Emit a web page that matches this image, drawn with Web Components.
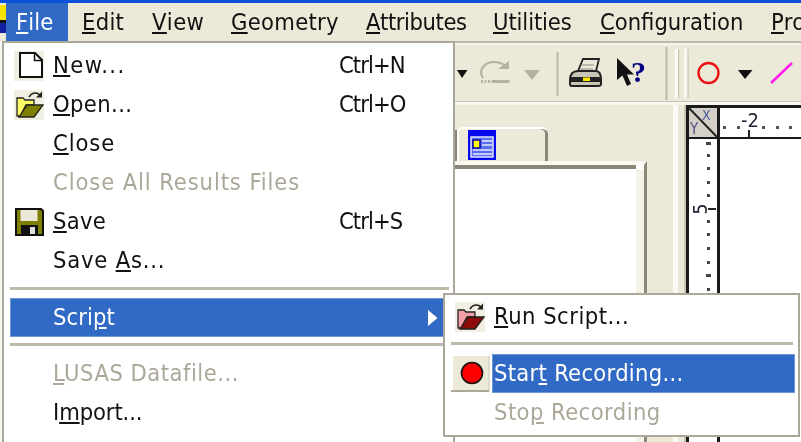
<!DOCTYPE html>
<html><head><meta charset="utf-8"><style>
html,body{margin:0;padding:0;width:801px;height:442px;overflow:hidden;background:#ece9d8}
</style></head><body>
<app-shell>
 <win-item slot="main" icon="new" shortcut="Ctrl+N" style="letter-spacing:1.400px"><u>N</u>ew...</win-item>
 <win-item slot="main" icon="open" shortcut="Ctrl+O" style="letter-spacing:.4px"><u>O</u>pen...</win-item>
 <win-item slot="main" style="letter-spacing:.9px"><u>C</u>lose</win-item>
 <win-item slot="main" disabled style="letter-spacing:.9px">Close All Results Files</win-item>
 <win-item slot="main" icon="save" shortcut="Ctrl+S" style="letter-spacing:.3px"><u>S</u>ave</win-item>
 <win-item slot="main" style="letter-spacing:.8px">Save <u>A</u>s...</win-item>
 <win-sep slot="main" style="margin:7px 0 8px"></win-sep>
 <win-item slot="main" active arrow>Scri<u>p</u>t</win-item>
 <win-sep slot="main" style="margin:6px 0 8px"></win-sep>
 <win-item slot="main" disabled style="letter-spacing:.5px"><u>L</u>USAS Datafile...</win-item>
 <win-item slot="main" style="letter-spacing:-.1px">I<u>m</u>port...</win-item>
 <win-item slot="main"><u>E</u>xport...</win-item>
 <win-item slot="sub" icon="run" style="letter-spacing:.5px"><u>R</u>un Script...</win-item>
 <win-sep slot="sub" style="margin:6px 2px 9px 0"></win-sep>
 <win-item slot="sub" icon="rec" active textonly style="letter-spacing:.3px">Star<u>t</u> Recording...</win-item>
 <win-item slot="sub" disabled style="letter-spacing:.45px">Sto<u>p</u> Recording</win-item>
</app-shell>
<script>
const folder=(dither,front)=>`<svg width="30" height="30" viewBox="0 0 30 30"><rect width="30" height="30" fill="#ece9d8" opacity=".75"/><path d="M3 26V8H9L11 10H20V15H12L6 26Z" fill="${dither}" stroke="#222" stroke-width="1.300"/><path d="M5 27L13 15H29L20 27Z" fill="${front}" stroke="#222" stroke-width="1.300"/><path d="M15 7C18 2 23 2 26 5" fill="none" stroke="#222" stroke-width="1.600"/><path d="M28 1.500V7.500H22Z" fill="#222"/></svg>`;
const icons={
 new:`<svg width="30" height="30" viewBox="0 0 30 30"><rect width="30" height="30" fill="#ece9d8" opacity=".75"/><path d="M6 2H21L28 9V26H6Z" fill="#fff" stroke="#111" stroke-width="2"/><path d="M20.500 2.500V9.500H28" fill="none" stroke="#111" stroke-width="1.500"/></svg>`,
 open:folder('#ffff66','#808000'),
 run:folder('#f4a0a8','#8b0a0a'),
 save:`<svg width="30" height="30" viewBox="0 0 30 30"><path d="M2 2H27L29 4V28H2Z" fill="#808000" stroke="#111" stroke-width="2"/><rect x="6.500" y="3" width="17" height="11" fill="#ece9d8"/><rect x="7" y="18" width="17" height="10" fill="#111"/><rect x="16" y="20" width="5" height="7" fill="#ddd"/></svg>`,
 rec:`<svg class="btn" width="39" height="37" viewBox="0 0 39 37"><rect x="2" y="1" width="36" height="34" fill="#ece9d8"/><path d="M38 0V36" stroke="#d6d3c4" stroke-width="1.500"/><path d="M0 36H38" stroke="#aca899" stroke-width="2"/><path d="M2 .5H38" stroke="#fff"/><circle cx="21" cy="18" r="10.500" fill="#f00" stroke="#111" stroke-width="1.600"/></svg>`
};
class WinItem extends HTMLElement{
 constructor(){super();const r=this.attachShadow({mode:'open'});
 const ic=this.getAttribute('icon'),sc=this.getAttribute('shortcut');
 r.innerHTML=`<style>
 :host{display:flex;align-items:stretch;height:39px;color:#111;white-space:nowrap}
 :host([disabled]){color:#aca899}
 :host([active]:not([textonly])){background:#316ac5;color:#fff;box-shadow:inset 0 0 0 1px #6f97d8}
 :host([textonly]) .t{background:#316ac5;color:#fff;box-shadow:inset 0 0 0 1px #6f97d8}
 .ic{width:var(--ic-w,43px);flex:none;display:flex;align-items:center;padding-left:var(--ic-p,4px);box-sizing:border-box}
 .t{flex:1;display:flex;align-items:center;padding:0 0 2px var(--t-p,0);box-sizing:border-box;white-space:pre}
 .s{width:var(--s-w,110px);flex:none;display:flex;align-items:center;justify-content:space-between;box-sizing:border-box;padding:0 11px 2px 0;letter-spacing:-.9px}
 .s svg{margin-top:2px}
 ::slotted(u){text-underline-offset:2px;text-decoration-thickness:2px}
 svg.btn{margin-left:calc(-1 * var(--ic-p,4px))}
 </style><span class="ic">${ic?icons[ic]:''}</span><span class="t"><span><slot></slot></span></span>${this.getAttribute('slot')=='sub'?'':`<span class="s"><span>${sc||''}</span>${this.hasAttribute('arrow')?'<svg width="10" height="16"><path d="M0 0L9.500 8L0 16Z" fill="#fff"/></svg>':''}</span>`}`;}
}
customElements.define('win-item',WinItem);
class WinMenu extends HTMLElement{
 constructor(){super();this.attachShadow({mode:'open'}).innerHTML=`<style>
 :host{display:block;background:#fff;border:2px solid #aca899;box-sizing:border-box;position:absolute;overflow:hidden}
 </style><slot></slot>`;}
}
customElements.define('win-menu',WinMenu);
class WinSep extends HTMLElement{
 constructor(){super();this.attachShadow({mode:'open'}).innerHTML=`<style>:host{display:block;height:3px;background:#bdbaaa}</style>`;}
}
customElements.define('win-sep',WinSep);

class RuleView extends HTMLElement{
 constructor(){super();
 const dx=[724,738,763,777,790],dy=[143,155,168,182,195,221,234,248,262,275,289];
 this.attachShadow({mode:'open'}).innerHTML=`<style>
 :host{display:grid;grid-template-columns:28px 1fr;grid-template-rows:29px 1fr;gap:2px 3px;background:#1a1a1a;border-left:3px solid #1a1a1a;border-top:3px solid #1a1a1a;flex:1;min-width:0;box-shadow:-2px 0 0 #c8c5b4}
 div{background:#fff;overflow:hidden;min-width:0;min-height:0}
 .c{background:#d4d0c8}
 svg{display:block}
 text{font-family:"DejaVu Sans Condensed","DejaVu Sans",sans-serif}
 </style>
 <div class="c"><svg width="28" height="29" viewBox="0 0 28 29"><path d="M0 0L28 29" stroke="#222" stroke-width="2"/><text x="13" y="12" font-size="14" fill="#4a5aa0">X</text><text x="1" y="26" font-size="15" fill="#5a4a80">Y</text></svg></div>
 <div><svg width="81" height="29" viewBox="720 108 81 29">
  ${dx.map(x=>`<rect x="${x-1}" y="126" width="3" height="3" fill="#555"/>`).join('')}
  <path d="M749 130V137" stroke="#222" stroke-width="2"/>
  <text x="750" y="127" font-size="20" text-anchor="middle" fill="#223">-2</text></svg></div>
 <div><svg width="28" height="303" viewBox="689 139 28 303">
  ${dy.map(y=>`<rect x="${y==143||y==275?706:707}" y="${y-1}" width="${y==143||y==275?5:3}" height="3" fill="#444"/>`).join('')}
  <path d="M708 209H716" stroke="#222" stroke-width="2"/>
  <text transform="translate(707 209) rotate(-90)" font-size="19" text-anchor="middle" fill="#223">5</text></svg></div>
 <div></div>`;}
}
customElements.define('rule-view',RuleView);

const tools=[
 [457,11,`<path d="M457 70H467.500L462 78Z" fill="#111"/>`],
 [480,32,`<path d="M483 78C478 70 484 62 495 62C501 62 505 65 507 69" fill="none" stroke="#b5b2a2" stroke-width="2.200"/><path d="M498 69H509V61Z" fill="#b5b2a2"/><path d="M481 81.500H510" stroke="#b5b2a2" stroke-width="3" stroke-dasharray="2 1.500 2 1.500 2 1.500 18"/>`],
 [523,18,`<path d="M524 70H540L532 80Z" fill="#b5b2a2"/>`],
 [556,3,`<path d="M557.500 52V96" stroke="#b9b6a6" stroke-width="2"/>`],
 [569,33,`<path d="M578 71L583 59H599L596 71Z" fill="#ece9d8" stroke="#222" stroke-width="1.800"/><path d="M582 65H594M580 69H593" stroke="#888" /><path d="M570 80C570 73 573 71 578 71H596C600 71 601 74 601 80V84C601 86 600 86 598 86H574C571 86 570 86 570 84Z" fill="#c8c5b4" stroke="#222" stroke-width="2"/><rect x="571" y="77" width="29" height="5" fill="#222"/><rect x="583" y="77.500" width="7" height="3.500" fill="#ffe800"/>`],
 [616,33,`<path d="M617 58V80L622.500 75.500L627 86L631 84L627 74.500H634Z" fill="#111"/><text x="631" y="82" font-family="Liberation Serif" font-size="30" font-weight="700" fill="#000080">?</text>`],
 [665,24,`<path d="M666.500 47V100" stroke="#bcb9a8" stroke-width="2"/><path d="M676.500 49V98M686 49V98" stroke="#faf8f0" stroke-width="3.500"/><path d="M678.700 49V98M688 49V98" stroke="#bcb9a8" stroke-width="1"/>`],
 [696,26,`<circle cx="708.500" cy="73" r="10" fill="none" stroke="#e81414" stroke-width="2.300"/>`],
 [737,16,`<path d="M738 70H752.500L745 79Z" fill="#111"/>`],
 [769,26,`<path d="M771 83L792 63" stroke="#ff1ff0" stroke-width="2.600"/>`]
];
let cur=2;
const toolHtml=tools.map(([x,w,p])=>{const m=x-cur;cur=x+w;return `<svg style="margin-left:${m}px;flex:none" width="${w}" height="56" viewBox="${x} 45 ${w} 56">${p}</svg>`}).join('');

class AppShell extends HTMLElement{
 constructor(){super();const r=this.attachShadow({mode:'open'});
 const menus=[['F','ile',52,1,0,.1],['E','dit',56,0,14,.3],['V','iew',79,0,14,.4],['G','eometry',135,0,0,.3],['A','ttributes',127,0,0,-.4],['U','tilities',107,0,0,-.1],['C','onfiguration',171,0,0,0],['P','ro',30,0,0,.1]];
 r.innerHTML=`<style>
 :host{display:flex;flex-direction:column;width:801px;height:442px;position:relative;overflow:hidden;background:#ece9d8;font:23.500px "DejaVu Sans Condensed","DejaVu Sans",sans-serif;letter-spacing:.1px;filter:blur(.45px)}
 .title{height:3px;background:#0a50d8;flex:none}
 .menubar{display:flex;height:38px;flex:none;white-space:nowrap;color:#111}
 .swatch{width:6px;flex:none;background:linear-gradient(#ece9d8 0 2px,#f5e500 2px 17px,#111 17px 20px,#1020a0 20px 30px,#ece9d8 30px)}
 .menubar span{display:flex;align-items:center;flex:none}
 .menubar u{text-underline-offset:2px;text-decoration-thickness:2px}
 .menubar span.on{background:#316ac5;color:#fff;padding-left:10px}
 .below{flex:1;display:flex;min-height:0;background:#fff}
 .edge{width:2px;flex:none;background:#f7f6f0}
 .main{flex:1;display:flex;flex-direction:column;min-width:0;background:#ece9d8}
 .line{height:2px;flex:none;background:#bdbaa9}
 .line2{height:2px;flex:none;background:#f6f4ea}
 .tb{display:flex;height:56px;flex:none}
 .tbfoot{flex:none;height:4px;background:linear-gradient(#c8c5b4 0 1px,#f8f6ee 1px)}
 .area{flex:1;display:flex;min-height:0}
 .tabs{width:645px;flex:none;display:flex;flex-direction:column;padding-top:22px;box-sizing:border-box}
 .tabrow{display:flex;height:34px;flex:none;margin-left:453px}
 .tabstub{width:2px;margin-top:3px;background:#8a8778}
 .tab{width:91px;box-sizing:border-box;border:solid #fff;border-width:2px 0 0 2px;border-radius:6px 6px 0 0;box-shadow:inset -3px 0 0 #8a8778;padding:1px 0 0 9px}
 .tab svg{display:block}
 .pane{flex:1;margin-left:452px;background:#fff;border-top:4px solid #faf8f0;border-right:3px solid #8a8778;display:flex;flex-direction:column}
 .panetop{height:4px;background:#8a8778;margin-right:8px}
 .panebody{flex:1;display:flex;justify-content:flex-end}
 .panestrip{width:8px;background:#f5f3e8}
 .split{width:5px;margin-left:26px;background:#fbfaf4;flex:none}
 .gap{width:8px;flex:none}
 </style>
 <div class="title"></div>
 <div class="menubar"><div class="swatch"></div>${menus.map(m=>`<span class="${m[3]?'on':''}" style="width:${m[2]}px;letter-spacing:${m[5]}px;${m[4]?`margin-left:${m[4]}px`:''}"><u>${m[0]}</u>${m[1]}</span>`).join('')}</div>
 <div class="below"><div class="edge"></div><div class="main">
  <div class="line"></div><div class="line2"></div>
  <div class="tb">${toolHtml}</div>
  <div class="tbfoot"></div>
  <div class="area">
   <div class="tabs">
    <div class="tabrow"><div class="tabstub"></div><div class="tab"><svg width="28" height="30" viewBox="0 0 28 30"><rect width="28" height="30" fill="#0808f0"/><rect x="3" y="7" width="22" height="20" fill="#5a6cf0" stroke="#dfe2ff" stroke-width="1.500"/><rect x="5" y="10" width="7" height="8" fill="#ff0" stroke="#0808a0" stroke-width="1.500"/><path d="M14 11H24M14 15H24M5 20H24M5 24H24" stroke="#e8eaff" stroke-width="1.600"/></svg></div></div>
    <div class="pane"><div class="panetop"></div><div class="panebody"><div class="panestrip"></div></div></div>
   </div>
   <div class="split"></div><div class="gap"></div>
   <rule-view></rule-view>
  </div>
 </div></div>
 <win-menu style="left:2px;top:41px;width:453px;height:410px;padding:3px 4px 0 6px"><slot name="main"></slot></win-menu>
 <win-menu style="left:443px;top:293px;width:357px;height:144px;padding:2px 3px 0 6px;--ic-w:41px;--t-p:2px;--ic-p:4px"><slot name="sub"></slot></win-menu>`;
 }
}
customElements.define('app-shell',AppShell);
</script></body></html>
